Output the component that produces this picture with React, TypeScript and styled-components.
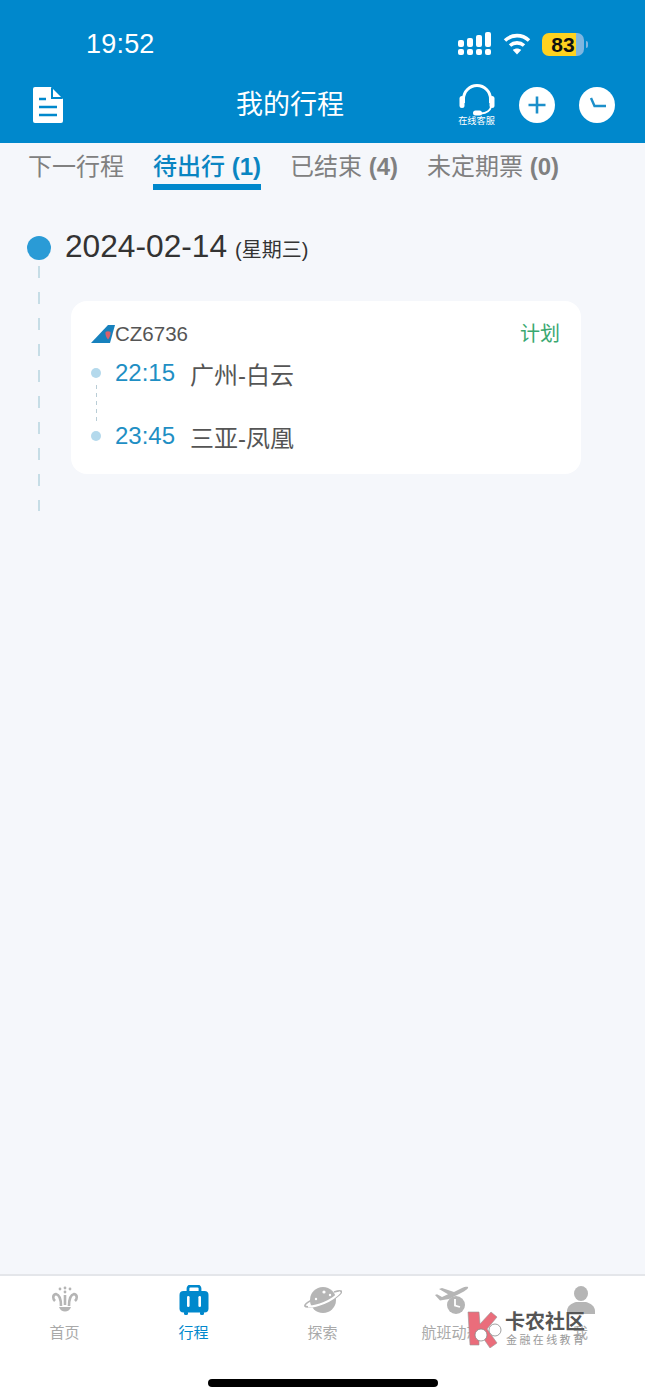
import React from 'react';
import styled, { createGlobalStyle } from 'styled-components';

const SANS = '"Liberation Sans", "Noto Sans CJK SC", sans-serif';

const GlobalStyle = createGlobalStyle`
  html, body {
    margin: 0;
    padding: 0;
    background: #f5f7fb;
    font-family: ${SANS};
  }
`;

const Page = styled.div`
  position: relative;
  display: flex;
  flex-direction: column;
  width: 645px;
  height: 1398px;
  overflow: hidden;
  background: #f5f7fb;
`;

const Header = styled.header`
  flex: none;
  height: 143px;
  background: #0088cc;
  color: #fff;
`;

const StatusBar = styled.div`
  display: flex;
  align-items: center;
  height: 24px;
  padding: 32px 57px 20px 86px;
`;

const Clock = styled.span`
  font-size: 27px;
  line-height: 24px;
  letter-spacing: 0.2px;
`;

const StatusIcons = styled.div`
  display: flex;
  align-items: center;
  margin-left: auto;
  gap: 11px;
`;

const Battery = styled.div`
  position: relative;
  width: 42px;
  height: 23px;
  border-radius: 7px;
  overflow: hidden;
  background: linear-gradient(90deg, #ffd21f 0 81%, #7fb6e0 81% 100%);
  color: #111;
  font-size: 21px;
  font-weight: 700;
  line-height: 23px;
  text-align: center;
`;

const BatteryWrap = styled.div`
  display: flex;
  align-items: center;
  gap: 2px;
`;

const BatteryNub = styled.div`
  width: 2px;
  height: 7px;
  border-radius: 0 2px 2px 0;
  background: #7fb6e0;
`;

const NavBar = styled.div`
  display: flex;
  align-items: center;
  height: 58px;
  padding: 0 30px 9px 33px;
`;

const NavTitle = styled.h1`
  margin: 0 0 0 173px;
  font-size: 27px;
  font-weight: 400;
  line-height: 34px;
`;

const NavActions = styled.div`
  display: flex;
  align-items: center;
  margin-left: auto;
  gap: 24px;
`;

const ServiceButton = styled.div`
  display: flex;
  flex-direction: column;
  align-items: center;
  width: 37px;
  margin-right: 0;
`;

const ServiceLabel = styled.span`
  font-size: 9.2px;
  line-height: 11px;
  white-space: nowrap;
`;

const Tabs = styled.nav`
  flex: none;
  display: flex;
  gap: 29px;
  padding: 10px 0 0 28px;
`;

const Tab = styled.div<{ $active?: boolean }>`
  padding-bottom: 3px;
  border-bottom: 6px solid ${(p) => (p.$active ? '#0088cc' : 'transparent')};
  color: ${(p) => (p.$active ? '#0a85c2' : '#808080')};
  font-size: 24px;
  font-weight: ${(p) => (p.$active ? 500 : 400)};
  line-height: 28px;
  white-space: nowrap;

  b {
    font-weight: 700;
  }
`;

const Content = styled.main`
  flex: 1;
  padding: 40px 0 0 27px;
`;

const DateRow = styled.div`
  display: flex;
  align-items: center;
  height: 36px;
  gap: 14px;
`;

const DateDot = styled.span`
  flex: none;
  width: 24px;
  height: 24px;
  border-radius: 50%;
  background: #2a9bd6;
`;

const DateText = styled.span`
  color: #333;
  font-size: 31.7px;
  line-height: 36px;

  small {
    margin-left: 8px;
    font-size: 20px;
  }
`;

const Group = styled.section`
  display: flex;
  margin: 0 0 0 11px;
  padding-top: 0;
`;

const Rail = styled.div`
  flex: none;
  width: 2px;
  margin-top: 0;
  background: repeating-linear-gradient(180deg, #c6dde6 0 12px, transparent 12px 26px);
`;

const Trips = styled.div`
  padding: 35px 0 37px 31px;
`;

const Card = styled.article`
  width: 510px;
  height: 173px;
  box-sizing: border-box;
  padding: 21px 21px 0 20px;
  border-radius: 16px;
  background: #fff;
`;

const CardHead = styled.div`
  display: flex;
  align-items: center;
  height: 24px;
`;

const FlightNo = styled.span`
  color: #555;
  font-size: 20.5px;
  line-height: 24px;
`;

const FlightStatus = styled.span`
  margin-left: auto;
  color: #3aa870;
  font-size: 20px;
  line-height: 24px;
`;

const Stops = styled.div`
  display: flex;
  flex-direction: column;
  gap: 33px;
  margin-top: 12px;
`;

const Stop = styled.div`
  position: relative;
  display: flex;
  align-items: center;
  height: 30px;
`;

const StopDot = styled.span`
  flex: none;
  width: 10px;
  height: 10px;
  margin-right: 14px;
  border-radius: 50%;
  background: #b4d9ec;
`;

const Connector = styled.span`
  position: absolute;
  left: 4.5px;
  top: 27px;
  width: 1px;
  height: 36px;
  background: repeating-linear-gradient(180deg, #b9cdd6 0 4px, transparent 4px 8px);
`;

const StopTime = styled.span`
  width: 75px;
  color: #1f8fc4;
  font-size: 24px;
`;

const StopName = styled.span`
  color: #555;
  font-size: 24px;
`;

const TabBar = styled.footer`
  flex: none;
  height: 124px;
  box-sizing: border-box;
  border-top: 2px solid #e4e6ea;
  background: #fff;
`;

const TabItems = styled.div`
  display: grid;
  grid-template-columns: repeat(5, 129px);
  padding-top: 9px;
`;

const TabItem = styled.div<{ $active?: boolean }>`
  display: flex;
  flex-direction: column;
  align-items: center;
  color: ${(p) => (p.$active ? '#0088cc' : '#a9a9a9')};
  font-size: 15px;
  line-height: 20px;
`;

const TabIconBox = styled.div`
  display: flex;
  align-items: center;
  justify-content: center;
  height: 30px;
  margin-bottom: 8px;
`;

const HomeIndicator = styled.div`
  width: 230px;
  height: 8px;
  margin: 36px auto 0;
  border-radius: 4px;
  background: #000;
`;

const Watermark = styled.div`
  position: absolute;
  left: 467px;
  top: 1310px;
  display: flex;
  align-items: center;
`;

const WatermarkText = styled.div`
  display: flex;
  flex-direction: column;
  margin-left: 2px;
`;

const WatermarkTitle = styled.span`
  color: #555;
  font-size: 20px;
  font-weight: 700;
  line-height: 22px;
  white-space: nowrap;
`;

const WatermarkSub = styled.span`
  margin-left: 1px;
  color: #999;
  font-size: 11px;
  letter-spacing: 2.4px;
  line-height: 14px;
  white-space: nowrap;
`;

const SignalIcon = () => (
  <svg width="34" height="24" viewBox="0 0 34 24" fill="#fff">
    <rect x="0" y="8" width="6" height="7" rx="2" />
    <rect x="9" y="6" width="6" height="9" rx="2" />
    <rect x="18" y="3" width="6" height="12" rx="2" />
    <rect x="27" y="0" width="6" height="15" rx="2" />
    <rect x="0" y="17" width="6" height="6" rx="2" />
    <rect x="9" y="17" width="6" height="6" rx="2" />
    <rect x="18" y="17" width="6" height="6" rx="2" />
    <rect x="27" y="17" width="6" height="6" rx="2" />
  </svg>
);

const WifiIcon = () => (
  <svg width="28" height="22" viewBox="0 0 28 22" fill="none" stroke="#fff" strokeWidth="3.6">
    <path d="M2 7.5C9 1 19 1 26 7.5" />
    <path d="M7 12.5C11 9 17 9 21 12.5" />
    <path d="M14 21.5l-4.2-4.6c2.4-2 6-2 8.4 0z" fill="#fff" stroke="none" />
  </svg>
);

const DocIcon = () => (
  <svg width="30" height="36" viewBox="0 0 30 36">
    <path d="M2 0h16l12 12v22a2 2 0 0 1-2 2H2a2 2 0 0 1-2-2V2a2 2 0 0 1 2-2z" fill="#fff" />
    <path d="M19 0.5V11h10.5" fill="none" stroke="#0088cc" strokeWidth="2" />
    <path d="M6 12h7M6 20h18M6 28h18" stroke="#0088cc" strokeWidth="2.6" />
  </svg>
);

const HeadsetIcon = () => (
  <svg width="36" height="33" viewBox="0 0 36 33" fill="none">
    <path d="M4.5 20V16a13.5 13.5 0 0 1 27 0v4" stroke="#fff" strokeWidth="3" />
    <rect x="0.5" y="13" width="5" height="12" rx="2.5" fill="#fff" />
    <rect x="30.5" y="13" width="5" height="12" rx="2.5" fill="#fff" />
    <path d="M32 24c-1 4-5 6-10 6.5" stroke="#fff" strokeWidth="1.8" />
    <rect x="14" y="27.5" width="9" height="5" rx="2.5" fill="#fff" />
  </svg>
);

const PlusCircle = () => (
  <svg width="36" height="36" viewBox="0 0 36 36">
    <circle cx="18" cy="18" r="18" fill="#fff" />
    <path d="M18 9.5v17M9.5 18h17" stroke="#1c8fca" strokeWidth="2.6" />
  </svg>
);

const ClockCircle = () => (
  <svg width="36" height="36" viewBox="0 0 36 36">
    <circle cx="18" cy="18" r="18" fill="#fff" />
    <path d="M12 11l3.5 8H27" fill="none" stroke="#1c8fca" strokeWidth="2.4" />
  </svg>
);

const TailLogo = () => (
  <svg width="24" height="18" viewBox="0 0 24 18" style={{ display: 'block' }}>
    <path d="M0 18L17 0h7l-5 18z" fill="#1781bd" />
    <path d="M14.5 7c1.5-1 3.5-1 5 0 .4 3-1 6-2.500 7.500C15.500 13 14 10 14.500 7z" fill="#d9606b" />
  </svg>
);

const OrchidIcon = () => (
  <svg width="28" height="28" viewBox="0 0 28 28" fill="none" stroke="#b5b5b5" strokeWidth="2.6">
    <path d="M14 19V9" />
    <path d="M10 20C10 13 9 9 5 8C1 9 2 13 4 15" />
    <path d="M18 20C18 13 19 9 23 8C27 9 26 13 24 15" />
    <path d="M8 21c2 6 10 6 12 0z" fill="#b5b5b5" stroke="none" />
    <g fill="#b5b5b5" stroke="none">
      <circle cx="14" cy="2" r="1.400" />
      <circle cx="9" cy="3" r="1.400" />
      <circle cx="19" cy="3" r="1.400" />
      <circle cx="14" cy="6" r="1.400" />
    </g>
  </svg>
);

const SuitcaseIcon = () => (
  <svg width="30" height="30" viewBox="0 0 30 30">
    <path d="M9 7V3.500A2.500 2.500 0 0 1 11.500 1h7A2.500 2.500 0 0 1 21 3.500V7" fill="none" stroke="#0088cc" strokeWidth="2.800" />
    <rect x="0.500" y="6" width="29" height="21.500" rx="4" fill="#0088cc" />
    <rect x="5" y="26" width="4" height="4" rx="1.500" fill="#0088cc" />
    <rect x="21" y="26" width="4" height="4" rx="1.500" fill="#0088cc" />
    <rect x="8" y="11" width="2.600" height="11" rx="1.300" fill="#fff" />
    <rect x="19.400" y="11" width="2.600" height="11" rx="1.300" fill="#fff" />
  </svg>
);

const PlanetIcon = () => (
  <svg width="38" height="28" viewBox="0 0 38 28">
    <circle cx="19" cy="14" r="13" fill="#b5b5b5" />
    <path d="M30 6c5-1.500 8-1.500 7.500 0 -.7 2.500-8 7.500-17 11S2 22 1 20c-.5-1.400 2-3.400 6-5.500" fill="none" stroke="#b5b5b5" strokeWidth="1.800" />
    <path d="M4 20.500c8 .5 24-5 32-14.500" fill="none" stroke="#fff" strokeWidth="2" />
    <circle cx="20" cy="6" r="1.600" fill="#fff" />
    <circle cx="26" cy="9" r="1.200" fill="#fff" />
    <circle cx="12" cy="13" r="1.200" fill="#fff" />
  </svg>
);

const FlightIcon = () => (
  <svg width="34" height="28" viewBox="0 0 34 28">
    <path d="M33 1c1 1.500-3 4-7 6L14 13l-9 1.500L0 9l2-.8 5 2.800 6-2.800L4 3l3-1 12 4 8-4c2-1 5-1.500 6-1z" fill="#b5b5b5" />
    <circle cx="21" cy="19" r="9" fill="#b5b5b5" />
    <path d="M20 13v6.500l5 1.500" fill="none" stroke="#fff" strokeWidth="1.800" />
  </svg>
);

const PersonIcon = () => (
  <svg width="28" height="28" viewBox="0 0 28 28" fill="#b5b5b5">
    <ellipse cx="14" cy="7.500" rx="7" ry="7.500" />
    <path d="M0 28v-3c0-5 5-8 9-9h10c4 1 9 4 9 9v3z" />
  </svg>
);

const WatermarkLogo = () => (
  <svg width="36" height="38" viewBox="0 0 36 38">
    <path d="M1 2h11l1 12L24 2l6 5-10 12 10 14-7 5L12 22v13H3z" fill="#ea6d7b" stroke="#999" strokeWidth="0.6" />
    <circle cx="14" cy="25" r="6" fill="#fff" stroke="#888" strokeWidth="0.8" />
    <circle cx="28" cy="20" r="6" fill="#fff" stroke="#888" strokeWidth="0.8" />
  </svg>
);

const tabs = [
  { label: '下一行程' },
  { label: '待出行', count: 1, active: true },
  { label: '已结束', count: 4 },
  { label: '未定期票', count: 0 },
];

const bottomTabs = [
  { label: '首页', icon: <OrchidIcon /> },
  { label: '行程', icon: <SuitcaseIcon />, active: true },
  { label: '探索', icon: <PlanetIcon /> },
  { label: '航班动态', icon: <FlightIcon /> },
  { label: '我', icon: <PersonIcon /> },
];

const App: React.FC = () => {
  return (
    <Page>
      <GlobalStyle />
      <Header>
        <StatusBar>
          <Clock>19:52</Clock>
          <StatusIcons>
            <SignalIcon />
            <WifiIcon />
            <BatteryWrap>
              <Battery>83</Battery>
              <BatteryNub />
            </BatteryWrap>
          </StatusIcons>
        </StatusBar>
        <NavBar>
          <DocIcon />
          <NavTitle>我的行程</NavTitle>
          <NavActions>
            <ServiceButton>
              <HeadsetIcon />
              <ServiceLabel>在线客服</ServiceLabel>
            </ServiceButton>
            <PlusCircle />
            <ClockCircle />
          </NavActions>
        </NavBar>
      </Header>

      <Tabs>
        {tabs.map((t) => (
          <Tab key={t.label} $active={t.active}>
            {t.label}
            {t.count !== undefined && <b> ({t.count})</b>}
          </Tab>
        ))}
      </Tabs>

      <Content>
        <DateRow>
          <DateDot />
          <DateText>
            2024-02-14<small>(星期三)</small>
          </DateText>
        </DateRow>
        <Group>
          <Rail />
          <Trips>
            <Card>
              <CardHead>
                <TailLogo />
                <FlightNo>CZ6736</FlightNo>
                <FlightStatus>计划</FlightStatus>
              </CardHead>
              <Stops>
                <Stop>
                  <StopDot />
                  <Connector />
                  <StopTime>22:15</StopTime>
                  <StopName>广州-白云</StopName>
                </Stop>
                <Stop>
                  <StopDot />
                  <StopTime>23:45</StopTime>
                  <StopName>三亚-凤凰</StopName>
                </Stop>
              </Stops>
            </Card>
          </Trips>
        </Group>
      </Content>

      <TabBar>
        <TabItems>
          {bottomTabs.map((t) => (
            <TabItem key={t.label} $active={t.active}>
              <TabIconBox>{t.icon}</TabIconBox>
              {t.label}
            </TabItem>
          ))}
        </TabItems>
        <HomeIndicator />
      </TabBar>

      <Watermark>
        <WatermarkLogo />
        <WatermarkText>
          <WatermarkTitle>卡农社区</WatermarkTitle>
          <WatermarkSub>金融在线教育</WatermarkSub>
        </WatermarkText>
      </Watermark>
    </Page>
  );
};

export default App;
